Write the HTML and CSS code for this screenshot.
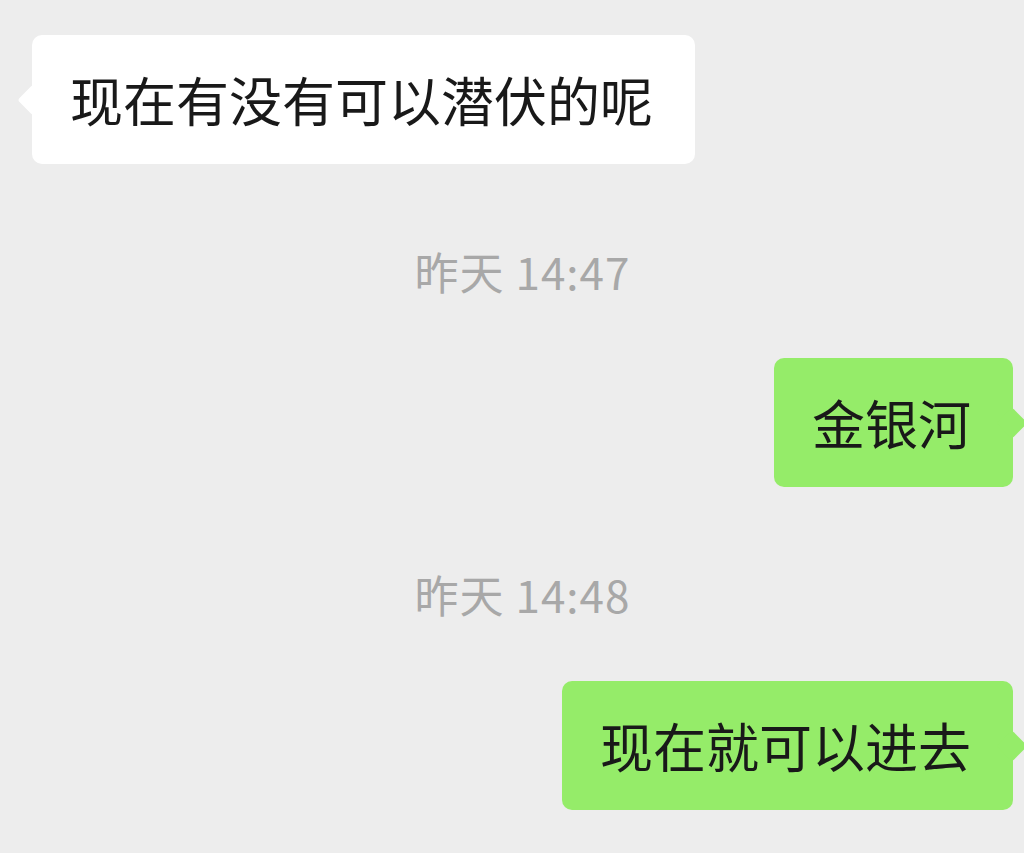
FILE: index.html
```html
<!DOCTYPE html>
<html lang="zh-CN">
<head>
  <meta charset="UTF-8">
  <meta name="viewport" content="width=device-width, initial-scale=1.0">
  <title>聊天</title>
  <link rel="stylesheet" href="styles.css">
</head>
<body>
  <div class="chat">
    <div class="row row-left first">
      <div class="bubble bubble-in">现在有没有可以潜伏的呢</div>
    </div>

    <div class="time">昨天 14:47</div>

    <div class="row row-right">
      <div class="bubble bubble-out">金银河</div>
    </div>

    <div class="time">昨天 14:48</div>

    <div class="row row-right">
      <div class="bubble bubble-out">现在就可以进去</div>
    </div>
  </div>
</body>
</html>
```

FILE: styles.css
```css
html, body {
  margin: 0;
  height: 100%;
}

body {
  background: #ededed;
  font-family: "Noto Sans CJK SC", "Noto Sans", sans-serif;
  color: #191919;
  overflow: hidden;
}

.chat {
  display: flex;
  flex-direction: column;
  padding: 35px 11px 0 32px;
}

.row {
  display: flex;
}

.row-left {
  justify-content: flex-start;
}

.row-right {
  justify-content: flex-end;
}

.bubble {
  position: relative;
  font-size: 53px;
  line-height: 65px;
  padding: 32px 42px 32px 38px;
  border-radius: 10px;
  white-space: nowrap;
}

.bubble::before {
  content: "";
  position: absolute;
  top: 50%;
  width: 22px;
  height: 22px;
  border-radius: 3px;
  transform: translateY(-50%) rotate(45deg);
}

.bubble-in {
  background: #ffffff;
}

.bubble-in::before {
  left: -10px;
  background: #ffffff;
}

.bubble-out {
  background: #95ec69;
}

.bubble-out::before {
  right: -10px;
  background: #95ec69;
}

.time {
  text-align: center;
  font-size: 44px;
  letter-spacing: 1px;
  line-height: 56px;
  color: #a8a8a8;
  margin: 79px 0 59px;
}
```
